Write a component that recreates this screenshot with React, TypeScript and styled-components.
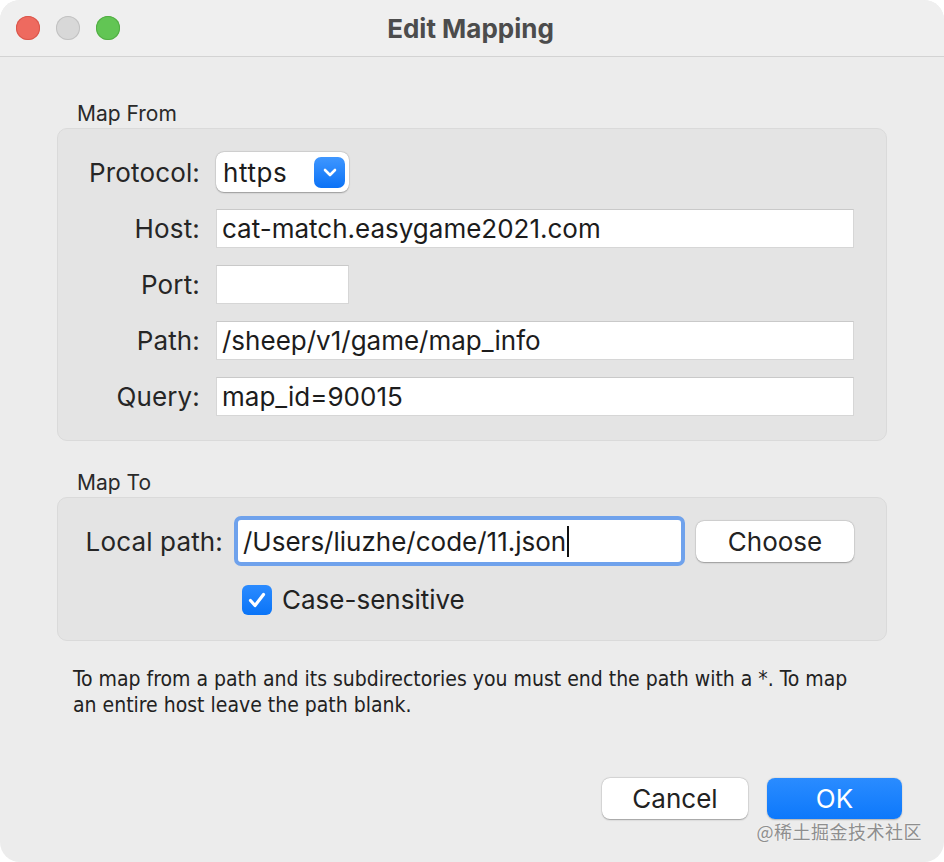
import React from "react";
import styled, { createGlobalStyle } from "styled-components";

const Global = createGlobalStyle`
  html, body { margin: 0; padding: 0; background: #ffffff; }
  body { font-family: Inter, "Noto Sans", "Liberation Sans", sans-serif; }
  * { box-sizing: border-box; }
`;

const Window = styled.div`
  width: 944px;
  height: 862px;
  background: #ececec;
  border-radius: 20px;
  overflow: hidden;
  display: flex;
  flex-direction: column;
  position: relative;
  color: #222;
`;

const TitleBar = styled.div`
  height: 57px;
  flex: none;
  background: #efefef;
  border-bottom: 1px solid #d3d3d3;
  display: grid;
  grid-template-columns: 1fr auto 1fr;
  align-items: center;
  padding: 0 16px;
`;

const Lights = styled.div`
  display: flex;
  gap: 16px;
  align-items: center;
`;

const Light = styled.span<{ $c: string; $b: string }>`
  width: 24px;
  height: 24px;
  border-radius: 50%;
  background: ${(p) => p.$c};
  box-shadow: inset 0 0 0 1px ${(p) => p.$b};
`;

const Title = styled.div`
  font-size: 26px;
  font-weight: 700;
  color: #4c4c4c;
  padding-right: 3px;
`;

const Body = styled.div`
  flex: 1;
  display: flex;
  flex-direction: column;
  padding: 0 57px;
`;

const SectionLabel = styled.div<{ $top: number }>`
  margin-top: ${(p) => p.$top}px;
  padding-left: 20px;
  font-size: 21px;
  line-height: 26px;
  height: 27px;
  color: #2a2a2a;
`;

const Group = styled.div<{ $pad: string }>`
  background: #e4e4e4;
  border: 1px solid #dadada;
  border-radius: 10px;
  padding: ${(p) => p.$pad};
`;

const FormGrid = styled.div<{ $label: number }>`
  display: grid;
  grid-template-columns: ${(p) => p.$label}px 1fr;
  column-gap: 16px;
  row-gap: 17px;
  align-items: center;
`;

const Label = styled.label<{ $w?: number }>`
  text-align: right;
  font-size: 26px;
  color: #262626;
  letter-spacing: 0.15px;
  flex: none;
  width: ${(p) => (p.$w ? `${p.$w}px` : "auto")};
`;

const Field = styled.div<{ $w?: number }>`
  height: 39px;
  width: ${(p) => (p.$w ? `${p.$w}px` : "100%")};
  background: #ffffff;
  border: 1px solid #d6d6d6;
  border-top-color: #c9c9c9;
  padding: 0 5px;
  display: flex;
  align-items: center;
  font-size: 26px;
  color: #1c1c1c;
  white-space: nowrap;
`;

const Popup = styled.div`
  width: 133px;
  height: 40px;
  background: #ffffff;
  border-radius: 8px;
  box-shadow: 0 0.5px 1.5px rgba(0, 0, 0, 0.3), 0 0 0 0.5px rgba(0, 0, 0, 0.08);
  display: flex;
  align-items: center;
  justify-content: space-between;
  padding: 0 4px 0 7px;
  font-size: 26px;
  color: #1c1c1c;
  letter-spacing: 0.6px;
`;

const PopupArrow = styled.span`
  width: 31px;
  height: 31px;
  border-radius: 7px;
  background: linear-gradient(#3f97ff, #0b72f6);
  display: flex;
  align-items: center;
  justify-content: center;
`;

const LocalRow = styled.div`
  display: flex;
  align-items: center;
  gap: 11px;
`;

const FocusField = styled.div`
  flex: 1;
  height: 50px;
  border: 4px solid #6fa2ec;
  border-radius: 7px;
  background: #ffffff;
  display: flex;
  align-items: center;
  padding: 0 5px;
  font-size: 26px;
  color: #1c1c1c;
`;

const Caret = styled.span`
  display: inline-block;
  width: 2px;
  height: 31px;
  background: #111;
  margin-left: 1px;
`;

const PushButton = styled.button<{ $w: number; $primary?: boolean }>`
  width: ${(p) => p.$w}px;
  height: 41px;
  flex: none;
  border: none;
  border-radius: 8px;
  font-family: inherit;
  font-size: 26px;
  color: ${(p) => (p.$primary ? "#ffffff" : "#222")};
  background: ${(p) => (p.$primary ? "linear-gradient(#2a8cff, #0d78fb)" : "#ffffff")};
  box-shadow: ${(p) =>
    p.$primary
      ? "0 0.5px 1.5px rgba(0,0,0,0.25)"
      : "0 0.5px 1.5px rgba(0,0,0,0.3), 0 0 0 0.5px rgba(0,0,0,0.08)"};
  padding: 0;
`;

const CheckRow = styled.div`
  display: flex;
  align-items: center;
  gap: 10px;
  margin-top: 18px;
  padding-left: 184px;
  font-size: 26px;
  color: #222;
`;

const CheckBox = styled.span`
  width: 30px;
  height: 30px;
  border-radius: 6px;
  background: linear-gradient(#2b8bff, #0a74f7);
  display: flex;
  align-items: center;
  justify-content: center;
`;

const Help = styled.p`
  margin: 25px 0 0 16px;
  font-family: "DejaVu Sans Condensed", "Liberation Sans", sans-serif;
  font-size: 21px;
  line-height: 26px;
  color: #222;
  width: 792px;
`;

const Footer = styled.div`
  margin-top: auto;
  display: flex;
  justify-content: flex-end;
  gap: 19px;
  padding: 0 42px 43px 0;
`;

const Watermark = styled.div`
  position: absolute;
  right: 22px;
  bottom: 18px;
  font-family: "Noto Sans CJK SC", sans-serif;
  font-size: 18px;
  color: #8e8e8e;
  letter-spacing: 0.5px;
  text-shadow: 0 0 2px rgba(255, 255, 255, 0.8);
`;

export default function App() {
  return (
    <>
      <Global />
      <Window>
        <TitleBar>
          <Lights>
            <Light $c="#ee6a5f" $b="#d9574c" />
            <Light $c="#d8d8d8" $b="#c2c2c2" />
            <Light $c="#62c554" $b="#52ad44" />
          </Lights>
          <Title>Edit Mapping</Title>
          <span />
        </TitleBar>
        <Body>
          <SectionLabel $top={44}>Map From</SectionLabel>
          <Group $pad="23px 32px 24px 0">
            <FormGrid $label={142}>
              <Label>Protocol:</Label>
              <Popup>
                https
                <PopupArrow>
                  <svg width="14" height="9" viewBox="0 0 14 9">
                    <path d="M2 2l5 5 5-5" stroke="#fff" strokeWidth="2.6" fill="none" strokeLinecap="round" strokeLinejoin="round" />
                  </svg>
                </PopupArrow>
              </Popup>
              <Label>Host:</Label>
              <Field>cat-match.easygame2021.com</Field>
              <Label>Port:</Label>
              <Field $w={133} />
              <Label>Path:</Label>
              <Field>/sheep/v1/game/map_info</Field>
              <Label>Query:</Label>
              <Field>map_id=90015</Field>
            </FormGrid>
          </Group>
          <SectionLabel $top={29}>Map To</SectionLabel>
          <Group $pad="18px 32px 25px 0">
            <LocalRow>
              <Label $w={165}>Local path:</Label>
              <FocusField>
                /Users/liuzhe/code/11.json
                <Caret />
              </FocusField>
              <PushButton $w={158}>Choose</PushButton>
            </LocalRow>
            <CheckRow>
              <CheckBox>
                <svg width="20" height="18" viewBox="0 0 20 18">
                  <path d="M3.5 9.5l4.5 5 8.5-11" stroke="#fff" strokeWidth="3.2" fill="none" strokeLinecap="round" strokeLinejoin="round" />
                </svg>
              </CheckBox>
              Case-sensitive
            </CheckRow>
          </Group>
          <Help>
            To map from a path and its subdirectories you must end the path with a *. To map an entire host leave the
            path blank.
          </Help>
        </Body>
        <Footer>
          <PushButton $w={146}>Cancel</PushButton>
          <PushButton $w={135} $primary>
            OK
          </PushButton>
        </Footer>
        <Watermark>@稀土掘金技术社区</Watermark>
      </Window>
    </>
  );
}
